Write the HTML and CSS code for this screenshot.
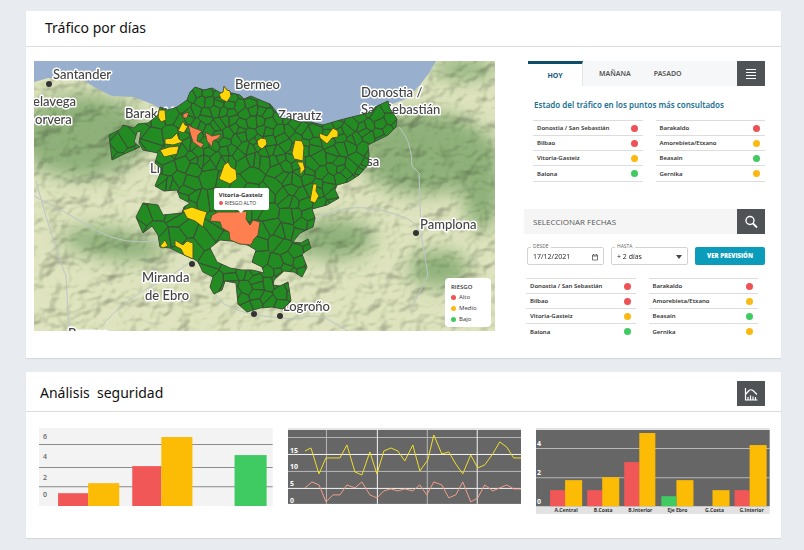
FILE: index.html
```
<!DOCTYPE html>
<html lang="es">
<head>
    <meta charset="UTF-8">
    <meta name="viewport" content="width=device-width, initial-scale=1.0">
    <title>Tráfico por días</title>
    <link rel="stylesheet" href="styles.css">
</head>
<body>
    <main>
        <section class="panel">
            <header class="panel-header">
                <h1>Tráfico por días</h1>
            </header>
            <div class="traffic">
                <div class="map">
                    <svg viewBox="0 0 461 270" role="img" aria-label="Mapa de riesgo por municipio">
                        <defs>
                            <filter id="relief" x="0" y="0" width="100%" height="100%" color-interpolation-filters="sRGB">
                                <feTurbulence type="fractalNoise" baseFrequency="0.04 0.05" numOctaves="3" seed="8" />
                                <feDiffuseLighting surfaceScale="6" diffuseConstant="1.15" lighting-color="#f4fff0">
                                    <feDistantLight azimuth="225" elevation="60" />
                                </feDiffuseLighting>
                            </filter>
                            <filter id="soft" x="-50%" y="-50%" width="200%" height="200%"><feGaussianBlur stdDeviation="9" /></filter>
                            <clipPath id="land">
                                <path d="M0 21 L14 17 L26 18 L42 14 L60 26 L78 35 L100 36 L120 44 L134 53 L180 60 L300 75 L350 46 L372 38 L386 24 L395 12 L402 0 L461 0 L461 270 L0 270 Z" />
                            </clipPath>
                            <clipPath id="region-clip">
                                <use href="#region" clip-rule="evenodd" />
                            </clipPath>
                        </defs>

                        <rect width="461" height="270" fill="#98b0cd" />
                        <g clip-path="url(#land)">
                            <rect width="461" height="270" fill="#dfe3bf" />
                            <g fill="#8fb07a" filter="url(#soft)">
                                <ellipse cx="48" cy="75" rx="64" ry="42" />
                                <ellipse cx="80" cy="183" rx="52" ry="15" transform="rotate(8 80 183)" />
                                <ellipse cx="390" cy="92" rx="66" ry="42" />
                                <ellipse cx="300" cy="178" rx="40" ry="20" />
                                <ellipse cx="405" cy="208" rx="30" ry="18" />
                                <ellipse cx="430" cy="8" rx="32" ry="10" />
                                <ellipse cx="448" cy="120" rx="20" ry="50" />
                            </g>
                            <rect class="relief" width="461" height="270" filter="url(#relief)" />
                            <g class="roads">
                                <path d="M2 120 Q10 150 18 175 T32 215 L35 270" />
                                <path d="M70 262 Q90 240 116 226 T155 202" />
                                <path d="M0 135 Q30 150 60 168 T125 179" />
                                <path d="M176 215 Q178 240 200 248 T262 258 Q285 250 300 262 L314 270" />
                                <path d="M365 66 Q378 80 378 105 L385 112 L387 172 L394 215 L376 250" />
                                <path d="M280 160 Q310 140 350 150 T382 172" />
                            </g>
                        </g>

                        <g class="places">
                            <text x="19" y="18">Santander</text>
                            <text x="-1" y="45">elavega</text>
                            <text x="1" y="63">orvera</text>
                            <text x="91" y="57">Barakaldo</text>
                            <text x="201" y="28">Bermeo</text>
                            <text x="327" y="36">Donostia /</text>
                            <text x="327" y="53">San Sebastián</text>
                            <text x="244" y="59">Zarautz</text>
                            <text x="309" y="105">Tolosa</text>
                            <text x="116" y="112">Llodio</text>
                            <text x="108" y="221">Miranda</text>
                            <text x="111" y="239">de Ebro</text>
                            <text x="386" y="168">Pamplona</text>
                            <text x="249" y="250">Logroño</text>
                            <text x="34" y="277">Burgos</text>
                        </g>
                        <g fill="#333">
                            <circle cx="15" cy="23" r="3" />
                            <circle cx="382" cy="172" r="3" />
                            <circle cx="158" cy="203" r="3" />
                            <circle cx="246" cy="255" r="3" />
                            <circle cx="220" cy="253" r="3" />
                        </g>

                        <path id="region" class="low" d="M75 74 L87 68 L89 64 L100 67 L104 63 L114 62 L124 54 L126 46 L134 49 L143 46 L153 39 L156 31 L161 26 L170 29 L178 27 L187 32 L198 32 L206 34 L210 38 L217 35 L226 39 L236 43 L241 49 L246 57 L256 58 L266 61 L276 61 L289 64 L306 59 L322 55 L338 51 L341 46 L354 40 L356 48 L363 58 L362 66 L354 74 L344 79 L334 84 L335 94 L334 104 L325 114 L314 121 L303 124 L301 129 L305 137 L293 144 L278 148 L281 157 L279 166 L266 172 L259 181 L267 182 L274 178 L277 187 L268 193 L273 206 L268 216 L260 211 L250 210 L240 219 L239 224 L246 225 L254 221 L257 240 L249 248 L238 246 L226 247 L213 251 L204 243 L202 222 L191 220 L188 229 L180 233 L176 226 L179 216 L169 211 L164 201 L160 198 L148 193 L136 187 L126 186 L124 174 L118 165 L109 172 L102 156 L109 142 L124 144 L129 154 L148 152 L150 146 L156 142 L146 137 L143 129 L130 130 L121 125 L128 108 L121 102 L124 92 L109 89 L105 82 L107 70 L103 71 L100 81 L106 86 L90 93 L78 99 Z M176 187 L186 179 L198 180 L210 182 L222 189 L218 201 L228 206 L230 212 L218 209 L208 209 L196 207 L183 201 Z" />
                        <path id="limits" class="limits" clip-path="url(#region-clip)" d="" />

                        <g class="medium">
                            <path d="M190 25 L193 29 L196 30 L197 35 L193 41 L187 38 L185 33 L189 31 Z" />
                            <path d="M125 49 L131 49 L132 59 L127 61 L124 56 Z" />
                            <path d="M149 60 L151 64 L154 65 L150 72 L144 70 Z" />
                            <path d="M143 72 L145 78 L149 81 L139 84 L131 83 L131 78 L138 77 Z" />
                            <path d="M126 89 L135 86 L145 85 L143 93 L130 96 Z" />
                            <path d="M223 80 L227 77 L232 78 L233 83 L228 88 L224 85 Z" />
                            <path d="M190 104 L194 101 L197 106 L202 109 L203 118 L196 123 L185 118 Z" />
                            <path d="M261 79 L268 80 L270 86 L269 100 L260 98 L258 92 Z" />
                            <path d="M263 101 L269 101 L271 108 L266 114 L266 107 Z" />
                            <path d="M285 72 L293 75 L299 67 L304 70 L304 76 L298 77 L293 83 L286 77 Z" />
                            <path d="M279 123 L283 123 L282 130 L285 135 L281 142 L276 140 Z" />
                            <path d="M149 149 L158 146 L166 149 L173 151 L171 157 L169 166 L161 160 L153 157 Z" />
                            <path d="M126 185 L131 179 L134 185 L129 187 Z" />
                            <path d="M141 179 L149 184 L153 180 L159 182 L159 198 L150 194 L147 188 L141 185 Z" />
                        </g>
                        <g class="high">
                            <path d="M154 64 L160 67 L168 70 L164 74 L163 80 L170 83 L167 87 L159 81 L157 75 Z" />
                            <path d="M171 71 L178 75 L187 73 L185 77 L179 80 L178 86 L173 80 Z" />
                            <path d="M149 53 L155 51 L153 57 L149 57 Z" />
                            <path d="M178 154 L184 151 L202 151 L213 150 L212 158 L216 164 L219 159 L226 161 L224 174 L220 178 L217 184 L206 183 L196 179 L195 171 L188 167 L186 161 L176 160 Z" />
                        </g>
                    </svg>
                    <div class="tooltip">
                        <strong>Vitoria-Gasteiz</strong>
                        <span><i class="dot red"></i>RIESGO ALTO</span>
                    </div>
                    <div class="legend">
                        <h2>RIESGO</h2>
                        <ul>
                            <li><i class="dot red"></i>Alto</li>
                            <li><i class="dot yellow"></i>Medio</li>
                            <li><i class="dot green"></i>Bajo</li>
                        </ul>
                    </div>
                </div>

                <div class="sidebar">
                    <nav class="tabs">
                        <button type="button" class="tab active">HOY</button>
                        <button type="button" class="tab">MAÑANA</button>
                        <button type="button" class="tab">PASADO</button>
                        <button type="button" class="icon-btn" aria-label="Ver lista">
                            <svg viewBox="0 0 28 25" width="28" height="25"><path d="M9 8.500h10M9 11.500h10M9 14.500h10M9 17.500h10" stroke="#fff" stroke-width="1" /></svg>
                        </button>
                    </nav>
                    <h2 class="subtitle">Estado del tráfico en los puntos más consultados</h2>
                    <div class="lists today">
                        <ul>
                            <li>Donostia / San Sebastián<i class="dot red"></i></li>
                            <li>Bilbao<i class="dot red"></i></li>
                            <li>Vitoria-Gasteiz<i class="dot yellow"></i></li>
                            <li>Baiona<i class="dot green"></i></li>
                        </ul>
                        <ul>
                            <li>Barakaldo<i class="dot red"></i></li>
                            <li>Amorebieta/Etxano<i class="dot yellow"></i></li>
                            <li>Beasain<i class="dot green"></i></li>
                            <li>Gernika<i class="dot yellow"></i></li>
                        </ul>
                    </div>

                    <div class="search-bar">
                        <h2>SELECCIONAR FECHAS</h2>
                        <button type="button" class="icon-btn" aria-label="Buscar">
                            <svg viewBox="0 0 28 25" width="28" height="25" fill="none" stroke="#fff"><circle cx="13" cy="11.500" r="4" stroke-width="1.400" /><path d="M16 14.500l4 4" stroke-width="1.800" /></svg>
                        </button>
                    </div>
                    <form class="dates">
                        <div class="field">
                            <label for="desde">DESDE</label>
                            <input type="text" id="desde" name="desde" value="17/12/2021">
                            <svg viewBox="0 0 8 8" width="8" height="8" fill="none" stroke="#555"><path d="M1.500 2h5v5h-5zM1.500 3h5M2.500 1v1M5.500 1v1" stroke-width=".8" /></svg>
                        </div>
                        <div class="field">
                            <label for="hasta">HASTA</label>
                            <select id="hasta" name="hasta">
                                <option>+ 2 días</option>
                            </select>
                            <svg viewBox="0 0 8 8" width="8" height="8"><path d="M1 2h6L4 6z" fill="#444" /></svg>
                        </div>
                        <button type="submit">VER PREVISIÓN</button>
                    </form>
                    <div class="lists forecast">
                        <ul>
                            <li>Donostia / San Sebastián<i class="dot red"></i></li>
                            <li>Bilbao<i class="dot red"></i></li>
                            <li>Vitoria-Gasteiz<i class="dot yellow"></i></li>
                            <li>Baiona<i class="dot green"></i></li>
                        </ul>
                        <ul>
                            <li>Barakaldo<i class="dot red"></i></li>
                            <li>Amorebieta/Etxano<i class="dot yellow"></i></li>
                            <li>Beasain<i class="dot green"></i></li>
                            <li>Gernika<i class="dot yellow"></i></li>
                        </ul>
                    </div>
                </div>
            </div>
        </section>

        <section class="panel">
            <header class="panel-header security">
                <h1>Análisis &nbsp;seguridad</h1>
                <button type="button" class="icon-btn" aria-label="Ver gráficos">
                    <svg viewBox="0 0 28 25" width="28" height="25" fill="none" stroke="#fff"><path d="M8.500 7v12h12M9 13l3-3.500q2-1.500 4 0l4 4M11 19v-3M13.500 19v-4.500M16 19v-3.500M18.500 19v-3" stroke-width="1.200" /></svg>
                </button>
            </header>
            <div class="charts">
                <svg class="chart" viewBox="0 0 233 78">
                    <rect width="233" height="78" fill="#f3f3f3" />
                    <path d="M0 16.500H233M0 39.500H233M0 58.500H233" stroke="#8b8b8b" />
                    <g class="bar-red"><rect x="19" y="65" width="30" height="13" /><rect x="93" y="38" width="29" height="40" /></g>
                    <g class="bar-yellow"><rect x="49" y="55" width="31" height="23" /><rect x="122" y="9" width="31" height="69" /></g>
                    <g class="bar-green"><rect x="195" y="27" width="32" height="51" /></g>
                    <g class="axis dark">
                        <text x="4" y="11">6</text>
                        <text x="4" y="31">4</text>
                        <text x="4" y="52">2</text>
                        <text x="4" y="69">0</text>
                    </g>
                </svg>
                <svg class="chart" viewBox="0 0 234 76">
                    <rect width="234" height="76" fill="#e6e6e6" />
                    <rect y="2" width="234" height="74" fill="#666" />
                    <path d="M0 9.500H234M0 43.500H234M38.500 2V76M139.500 2V76" stroke="#b8b8b8" />
                    <path d="M0 26.500H234M0 60.500H234M89.500 2V76M189.500 2V76" stroke="#f5f5f5" />
                    <g class="axis">
                        <text x="2" y="25">15</text>
                        <text x="2" y="41">10</text>
                        <text x="2" y="58">5</text>
                        <text x="2" y="75">0</text>
                    </g>
                    <polyline class="line" stroke="#f0a08a" points="17,60 24,54 31,57 38,74 45,67 52,67 59,57 67,60 74,54 82,67 89,70 96,63 103,61 110,63 117,61 125,63 132,57 139,67 146,54 154,57 161,70 168,67 175,54 183,74 190,70 197,57 205,63 212,60 219,57 226,61 234,61" />
                    <polyline class="line" stroke="#f0de28" points="17,23 23,20 31,46 38,30 52,30 59,17 67,44 74,47 82,24 89,46 96,23 103,20 110,23 117,33 125,17 132,43 140,32 146,7 154,26 161,24 168,36 175,46 183,27 190,40 197,37 205,26 212,14 219,19 226,30 234,30" />
                </svg>
                <svg class="chart" viewBox="0 0 233 86">
                    <rect width="233" height="86" fill="#e2e2e2" />
                    <rect y="2" width="233" height="76" fill="#666" />
                    <path d="M0 20.500H233M0 49.500H233" stroke="#b8b8b8" />
                    <g class="bar-red"><rect x="14" y="62" width="15" height="16" /><rect x="51" y="62" width="15" height="16" /><rect x="88" y="34" width="15" height="44" /><rect x="198" y="62" width="15" height="16" /></g>
                    <g class="bar-yellow"><rect x="29" y="52" width="17" height="26" /><rect x="66" y="49" width="17" height="29" /><rect x="103" y="5" width="16" height="73" /><rect x="140" y="52" width="17" height="26" /><rect x="176" y="62" width="17" height="16" /><rect x="213" y="17" width="17" height="61" /></g>
                    <g class="bar-green"><rect x="125" y="68" width="15" height="10" /></g>
                    <g class="axis">
                        <text x="1" y="18">4</text>
                        <text x="1" y="47">2</text>
                        <text x="1" y="76">0</text>
                    </g>
                    <g class="zones">
                        <text x="30" y="84">A.Central</text>
                        <text x="67" y="84">B.Costa</text>
                        <text x="104" y="84">B.Interior</text>
                        <text x="141" y="84">Eje Ebro</text>
                        <text x="178" y="84">G.Costa</text>
                        <text x="215" y="84">G.Interior</text>
                    </g>
                </svg>
            </div>
        </section>
    </main>
    <script src="map.js"></script>
</body>
</html>
```
FILE: styles.css
```
* { box-sizing: border-box; }
body { margin: 0; background: #e8ebf0; color: #333; font-family: "Open Sans", "Noto Sans", sans-serif; font-size: 6px; }
main { padding: 11px 23px 11px 26px; }
h1, h2, ul { margin: 0; padding: 0; }
ul { list-style: none; }
button, input, select { font-family: inherit; }
button { padding: 0; border: none; cursor: pointer; }
svg { display: block; }

.panel { background: #fff; box-shadow: 0 1px 1px #d5d9df; margin-bottom: 14px; }
.panel:last-child { margin-bottom: 0; }
.panel-header { display: flex; align-items: center; justify-content: space-between; height: 36px; padding: 0 16px 2px 19px; border-bottom: 1px solid #dcdcdc; }
.panel-header h1 { color: #111; font: 400 14px/20px "Noto Sans", sans-serif; }
.panel-header.security { height: 40px; padding: 3px 16px 0 14px; }
.icon-btn { width: 28px; height: 25px; background: #505356; }

.traffic { display: grid; grid-template-columns: 461fr 241fr; gap: 29px; padding: 14px 16px 19px 8px; }
.map { position: relative; align-self: start; overflow: hidden; }
.map > svg { width: 100%; height: auto; }
.relief { mix-blend-mode: multiply; opacity: 0.4; }
.roads { fill: none; stroke: #bcc6c6; stroke-width: 1; }
.places { fill: #444; stroke: #fff; stroke-width: 3px; stroke-linejoin: round; paint-order: stroke; font: 500 13px Lato, sans-serif; }
.low { fill: #228b22; fill-rule: evenodd; stroke: #3c5136; stroke-width: 1; }
.limits { fill: none; stroke: #3c5136; stroke-width: 1; }
.medium { fill: #ffd60a; stroke: #4a5a2c; stroke-width: 1; }
.high { fill: #ff7f50; stroke: #4a5a2c; stroke-width: 1; }

.dot { display: inline-block; width: 7px; height: 7px; border-radius: 50%; }
.red { background: #ee5256; }
.yellow { background: #fbba12; }
.green { background: #3fca62; }

.tooltip { position: absolute; left: 39%; top: 47%; width: 55px; padding: 3px 5px; background: #fff; border-radius: 2px; line-height: 8px; white-space: nowrap; }
.tooltip::after { content: ""; position: absolute; left: 24px; top: 100%; border: 3px solid transparent; border-top-color: #fff; }
.tooltip strong { display: block; font-weight: 700; }
.tooltip span { display: flex; align-items: center; gap: 2px; font-size: 5px; }
.tooltip .dot { width: 4px; height: 4px; }
.legend { position: absolute; right: 4px; bottom: 4px; width: 46px; padding: 4px 6px 2px; background: #fff; border-radius: 4px; }
.legend h2 { font-size: 6px; line-height: 10px; font-weight: 600; }
.legend li { display: flex; align-items: center; gap: 3px; line-height: 11px; }
.legend .dot { width: 5px; height: 5px; }

.tabs { display: flex; margin-left: 4px; background: #f6f7f9; }
.tab { height: 25px; padding: 0 7px; background: none; color: #555; font: 600 7px "Noto Sans", sans-serif; }
.tab + .tab { padding-left: 16px; }
.tab.active { width: 55px; border-top: 3px solid #0f4d6b; border-right: 1px solid #e2e4e8; background: #fff; color: #14597a; font-weight: 700; }
.tabs .icon-btn { margin-left: auto; }
.subtitle { margin: 12px 0 8px 10px; color: #1b7093; font: 600 8px/14px "Noto Sans", sans-serif; }
.lists { display: grid; grid-template-columns: 1fr 1fr; gap: 13px; font-family: "Noto Sans", sans-serif; }
.today { margin: 0 0 27px 9px; }
.forecast { margin: 13px 7px 0 2px; }
.lists ul { border-top: 1px solid #ddd; }
.lists li { display: flex; justify-content: space-between; align-items: center; padding: 0 5px 0 4px; height: 15px; border-bottom: 1px solid #ddd; font-weight: 600; }
.today li:last-child { height: 16px; }
.forecast li:last-child { border-bottom: none; }

.search-bar { display: flex; justify-content: space-between; align-items: center; padding-left: 9px; background: #f5f5f6; }
.search-bar h2 { color: #555; font-size: 8px; font-weight: 400; }
.dates { display: flex; gap: 7px; margin: 13px 0 0 3px; }
.field { position: relative; flex: 1; }
.field label { position: absolute; left: 4px; top: -4px; padding: 0 2px; background: #fff; color: #666; font-size: 5px; line-height: 7px; }
.field input, .field select { display: block; width: 100%; height: 18px; padding: 0 5px; border: 1px solid #d3d3d3; border-radius: 2px; background: #fff; color: #222; font-size: 7px; appearance: none; }
.field svg { position: absolute; right: 5px; top: 6px; pointer-events: none; }
.dates button { width: 70px; height: 18px; border-radius: 2px; background: #0b9cbc; color: #fff; font-size: 6px; font-weight: 800; }

.charts { display: grid; grid-template-columns: 1fr 1fr 1fr; gap: 15px; align-items: start; padding: 16px 11px 24px 13px; }
.chart { width: 100%; height: auto; }
.axis { fill: #fff; font-size: 7px; font-weight: 700; }
.axis.dark { fill: #666; font-weight: 600; }
.zones { fill: #333; font-size: 5px; font-weight: 700; text-anchor: middle; }
.line { fill: none; stroke-width: 1; }
.bar-red { fill: #f25757; }
.bar-yellow { fill: #fcbb04; }
.bar-green { fill: #40ca62; }
```
FILE: map.js
```
// Municipality limits: one cell around each town centre
let seed = 11;
function random() {
    seed = (seed * 16807) % 2147483647;
    return seed / 2147483647;
}

const towns = [];
// x, y, width, height and spacing: smaller municipalities near the coast
const areas = [
    [70, 50, 80, 80, 15],
    [150, 20, 90, 75, 9],
    [240, 45, 130, 90, 10],
    [120, 95, 120, 45, 16],
    [95, 140, 150, 75, 17],
    [245, 135, 50, 75, 12],
    [195, 208, 70, 45, 11]
];

for (const [x0, y0, w, h, step] of areas) {
    for (let y = y0; y < y0 + h; y += step) {
        for (let x = x0; x < x0 + w; x += step) {
            towns.push([x + random() * step, y + random() * step]);
        }
    }
}

// keep the part of the polygon that is nearer to a than to b
function cut(polygon, a, b) {
    const nx = b[0] - a[0];
    const ny = b[1] - a[1];
    const limit = (b[0] * b[0] + b[1] * b[1] - a[0] * a[0] - a[1] * a[1]) / 2;
    const side = (p) => p[0] * nx + p[1] * ny - limit;
    const result = [];
    polygon.forEach((p, i) => {
        const q = polygon[(i + 1) % polygon.length];
        const sp = side(p);
        const sq = side(q);
        if (sp <= 0) result.push(p);
        if (sp * sq < 0) {
            const t = sp / (sp - sq);
            result.push([p[0] + (q[0] - p[0]) * t, p[1] + (q[1] - p[1]) * t]);
        }
    });
    return result;
}

let d = '';
for (const town of towns) {
    let cell = [[0, 0], [461, 0], [461, 270], [0, 270]];
    for (const other of towns) {
        if (other !== town) cell = cut(cell, town, other);
    }
    if (cell.length > 2) {
        d += 'M' + cell.map((p) => p[0].toFixed(1) + ' ' + p[1].toFixed(1)).join('L') + 'Z';
    }
}
document.getElementById('limits').setAttribute('d', d);
```
